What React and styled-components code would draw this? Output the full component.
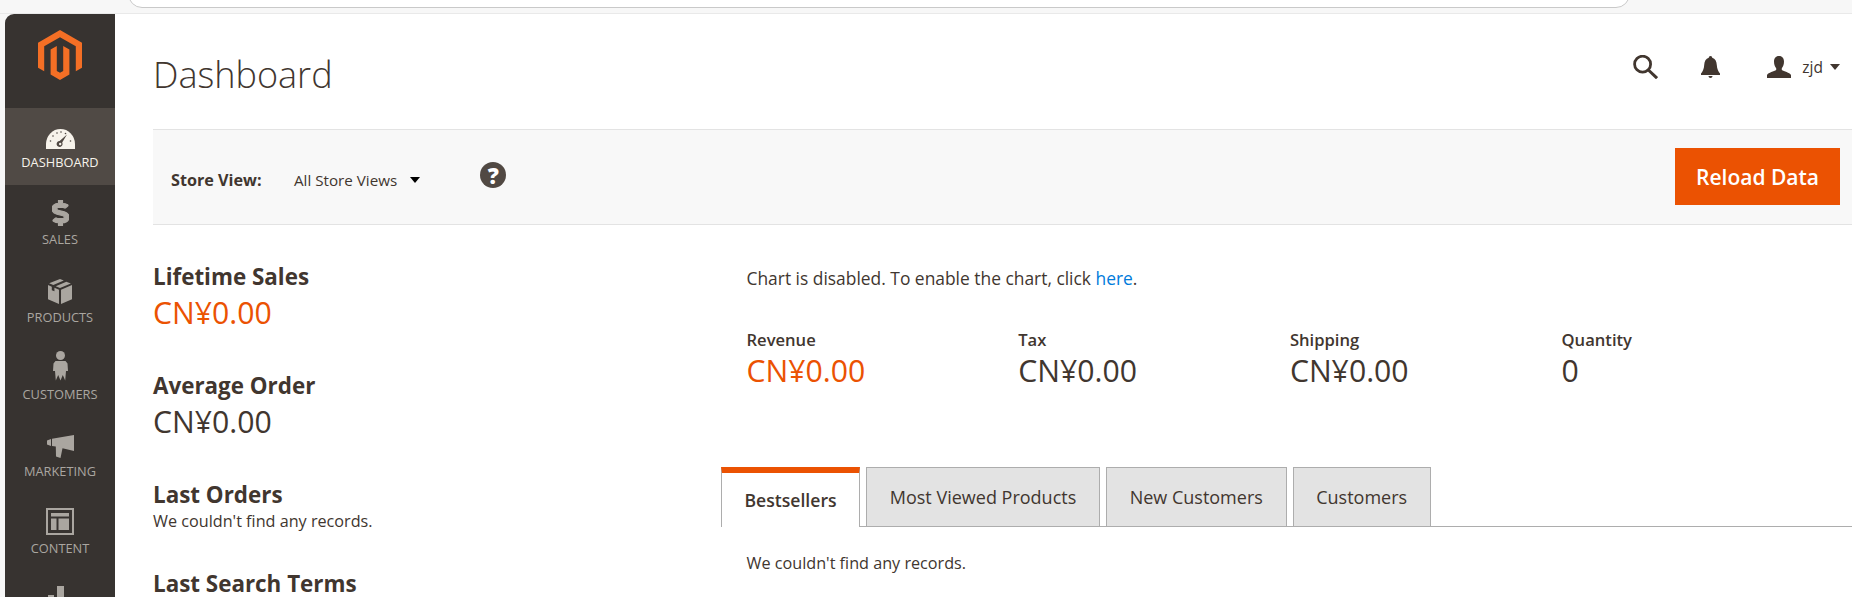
import React from "react";
import styled, { createGlobalStyle } from "styled-components";
import { FaDollarSign } from "react-icons/fa";

const Global = createGlobalStyle`
  html, body { margin: 0; padding: 0; background: #fff; }
  body { font-family: "Open Sans", "Noto Sans", sans-serif; color: #41362f; }
`;

const Page = styled.div`
  width: 1852px; height: 597px; overflow: hidden;
  display: flex; flex-direction: column; background: #f7f7f7;
`;
const BrowserBar = styled.div`
  flex: 0 0 14px; height: 14px; box-sizing: border-box; overflow: hidden;
  padding-left: 128px; background: #f7f7f7; border-bottom: 1px solid #e9e9e9;
`;
const AddressBar = styled.div`
  width: 1502px; height: 28px; margin-top: -20px; box-sizing: border-box;
  background: #fff; border: 1px solid #c9c9c9; border-radius: 14px;
`;
const Body = styled.div`
  flex: 1; display: flex; padding-left: 5px; min-height: 0;
`;
const Sidebar = styled.nav`
  flex: 0 0 110px; background: #373330; border-top-left-radius: 9px; overflow: hidden;
`;
const LogoBox = styled.div`
  height: 94px; display: flex; justify-content: center; padding-top: 16px; box-sizing: border-box;
`;
const NavItem = styled.a`
  display: flex; flex-direction: column; align-items: center;
  height: 77.3px; box-sizing: border-box; padding-top: 10px;
  background: ${p => (p.$active ? "#504a45" : "transparent")};
  color: ${p => (p.$active ? "#f7f3eb" : "#aaa6a0")};
`;
const NavIcon = styled.span`
  height: 31px; display: flex; align-items: flex-end; justify-content: center;
`;
const NavLabel = styled.span`
  font-size: 12.8px; line-height: 16px; margin-top: 5px; text-transform: uppercase;
`;
const Main = styled.main`
  flex: 1; min-width: 0; background: #fff; padding-left: 38px;
`;
const Header = styled.header`
  height: 115px; display: flex; justify-content: space-between; box-sizing: border-box;
`;
const Title = styled.h1`
  margin: 38px 0 0; font-size: 36px; line-height: 46px; font-weight: 300; color: #41362f;
`;
const Actions = styled.div`
  display: flex; align-items: center; height: 26px; margin-top: 40px; padding-right: 12px;
`;
const ActionIcon = styled.span`
  display: flex; margin-left: ${p => p.$gap}px;
`;
const UserName = styled.span`
  font-size: 15.5px; margin-left: 11px; line-height: 20px;
`;
const Caret = styled.span`
  width: 0; height: 0; margin-left: ${p => p.$gap}px;
  border-left: 5px solid transparent; border-right: 5px solid transparent;
  border-top: 6px solid ${p => p.$color || "#41362f"};
`;
const StoreBar = styled.div`
  height: 96px; box-sizing: border-box; display: flex; justify-content: space-between;
  background: #f8f8f8; border-top: 1px solid #e3e3e3; border-bottom: 1px solid #e3e3e3;
  padding: 18px 12px 0 18px;
`;
const Scope = styled.div`
  display: flex; align-items: center; height: 66px; margin-top: -1px;
`;
const ScopeLabel = styled.strong`
  font-size: 16.2px; font-weight: 700; width: 123px;
`;
const ScopeValue = styled.span`
  font-size: 15.2px; color: #41362f;
`;
const Help = styled.span`
  width: 26px; height: 26px; border-radius: 50%; background: #514943; color: #fff;
  display: flex; align-items: center; justify-content: center;
  font-size: 22px; font-weight: 800; margin: -10px 0 0 60px;
`;
const ReloadButton = styled.button`
  width: 165px; height: 57px; border: 0; background: #eb5202; color: #fff;
  font: 600 21px "Open Sans", sans-serif;
`;
const Content = styled.div`
  display: grid; grid-template-columns: 568px 1fr;
`;
const Side = styled.div`
  padding-top: 36px;
`;
const Block = styled.section`
  margin-bottom: 35px;
`;
const BlockTitle = styled.h3`
  margin: 0 0 -2px; font-size: 22.4px; line-height: 32px; font-weight: 700; color: #41362f;
`;
const Amount = styled.div`
  font-size: 30.2px; line-height: 44px; color: ${p => (p.$accent ? "#eb5202" : "#41362f")};
`;
const Note = styled.p`
  margin: 0; font-size: 16.2px; line-height: 24px;
`;
const Charts = styled.div`
  padding-top: 41px;
`;
const ChartNote = styled.p`
  margin: 0 0 0 25.5px; font-size: 17.4px; line-height: 24px;
  a { color: #007bdb; text-decoration: none; }
`;
const Totals = styled.div`
  display: grid; grid-template-columns: repeat(4, 271.7px); margin: 40px 0 0 25.5px;
`;
const TotalLabel = styled.div`
  font-size: 16.6px; line-height: 19px; font-weight: 600;
`;
const TabRow = styled.div`
  display: flex; gap: 6px; margin-top: 74px; height: 60px; box-sizing: border-box;
  border-bottom: 1px solid #adadad;
`;
const Tab = styled.div`
  box-sizing: border-box; height: 60px; padding: 0 ${p => p.$pad}px;
  display: flex; align-items: center;
  font-size: ${p => (p.$active ? 17.6 : 18)}px; font-weight: ${p => (p.$active ? 600 : 400)};
  background: ${p => (p.$active ? "#fff" : "#e3e3e3")};
  border: 1px solid #adadad; border-bottom: ${p => (p.$active ? "0" : "1px solid #adadad")};
  border-top: ${p => (p.$active ? "6px solid #eb5202" : "1px solid #adadad")};
`;
const TabBody = styled.p`
  margin: 25px 0 0 25.5px; font-size: 16.2px; line-height: 22px;
`;

const c = "#aaa6a0";
const Logo = () => (
  <svg width="44" height="50" viewBox="0 0 44 50" fill="#f46f25">
    <path d="M22 0L44 12.7V37.7L37.8 41.3V16.3L22 7.2 6.2 16.3V41.3L0 37.7V12.7Z" />
    <path d="M22 50L12.6 44.6V19.6L18.8 16V41L22 42.8 25.2 41V16L31.4 19.6V44.6Z" />
  </svg>
);
const GaugeIcon = () => (
  <svg width="29" height="20" viewBox="0 0 29 20">
    <path d="M0 20V15A14.5 15 0 0 1 29 15V20Z" fill="#f7f3eb" />
    <g fill="#514943">
      <circle cx="4.5" cy="12" r=".8" /><circle cx="7" cy="7" r=".8" /><circle cx="11" cy="4" r=".8" />
      <circle cx="15" cy="3" r=".8" /><circle cx="19.5" cy="4.5" r=".8" /><circle cx="24.5" cy="12" r=".8" />
    </g>
    <path d="M21 5.5L16.2 13.5A3 3 0 1 1 13.6 12Z" fill="#514943" />
    <circle cx="14.2" cy="15" r="1.2" fill="#f7f3eb" />
  </svg>
);
const BoxIcon = () => (
  <svg width="24" height="25" viewBox="2.5 .5 19 23.5" preserveAspectRatio="none" fill={c}>
    <path d="M12 0.5L15 2 6.7 6.2 3.4 4.6ZM17 3L20.6 4.7 12 9 8.6 7.2Z" />
    <path d="M2.5 6.2L5.5 7.7V11L7.6 12V8.8L11.2 10.5V24L2.5 19.5Z" />
    <path d="M21.5 6.2V19.5L12.8 24V10.5Z" />
  </svg>
);
const CustomerIcon = () => (
  <svg width="15" height="30" viewBox="0 0 15 30" fill={c}>
    <circle cx="7.5" cy="4.5" r="4.5" />
    <path d="M2.5 10H12.5L14.5 12.5 15 20H13L12.2 29.5 9.8 24 7.5 29.5 5.2 24 2.8 29.5 2 20H0L.5 12.5Z" />
  </svg>
);
const MegaphoneIcon = () => (
  <svg width="27" height="23" viewBox="0 0 27 23" fill={c}>
    <path d="M0 5.5L4 4V11L0 9.5Z" />
    <path d="M5 3.8L27 0V16L15.5 13.2 13.5 23 9 21.5 8.8 11.6 5 11Z" />
  </svg>
);
const ContentIcon = () => (
  <svg width="28" height="27" viewBox="0 0 28 27" fill={c}>
    <path fillRule="evenodd" d="M0 0H28V27H0ZM2 2V25H26V2Z" />
    <path d="M5 5H23V8.5H5ZM5 10.5H10.5V22H5ZM12.5 10.5H23V22H12.5Z" />
  </svg>
);
const ReportsIcon = () => (
  <svg width="27" height="27" viewBox="0 0 27 27" fill={c}>
    <path d="M1 9H7V27H1ZM10 0H17V27H10ZM20 14H26V27H20Z" />
  </svg>
);
const SearchIcon = () => (
  <svg width="25" height="24" viewBox="0 0 25 24" fill="none" stroke="#41362f" strokeWidth="2.8">
    <circle cx="9.6" cy="9.2" r="8" />
    <path d="M15.4 15L24 23.2" strokeWidth="3" />
  </svg>
);
const BellIcon = () => (
  <svg width="19" height="22" viewBox="0 0 19 22" fill="#41362f">
    <path d="M9.5 0C10.6 0 11.2.8 11.2 1.8C14.2 2.8 15.6 5.3 15.8 9C16 13 17.4 15.6 19 17.6V19H0V17.6C1.6 15.6 3 13 3.2 9C3.4 5.3 4.8 2.8 7.8 1.8C7.8.8 8.4 0 9.5 0Z" />
    <path d="M7.5 20H11.5C11.5 21 10.6 22 9.5 22S7.5 21 7.5 20Z" />
  </svg>
);
const UserIcon = () => (
  <svg width="24" height="22" viewBox="0 0 24 22" fill="#41362f">
    <path d="M12 0C15.5 0 17 2.6 17 5.6C17 8.6 16 11 14.8 12.2V14C17 15.4 22.5 16.4 24 19V22H0V19C1.5 16.4 7 15.4 9.2 14V12.2C8 11 7 8.6 7 5.6C7 2.6 8.5 0 12 0Z" />
  </svg>
);
const SalesIcon = styled(FaDollarSign)`
  width: 17px; height: 26px; stroke: currentColor; stroke-width: 24px;
`;

const nav = [
  ["Dashboard", <GaugeIcon />, true],
  ["Sales", <SalesIcon preserveAspectRatio="none" />],
  ["Products", <BoxIcon />],
  ["Customers", <CustomerIcon />],
  ["Marketing", <MegaphoneIcon />],
  ["Content", <ContentIcon />],
  [null, <ReportsIcon />],
];
const totals = [["Revenue", "CN¥0.00", true], ["Tax", "CN¥0.00"], ["Shipping", "CN¥0.00"], ["Quantity", "0"]];
const tabs = [["Bestsellers", 22.5, true], ["Most Viewed Products", 22.7], ["New Customers", 22.7], ["Customers", 22.7]];

export default function App() {
  return (
    <Page>
      <Global />
      <BrowserBar><AddressBar /></BrowserBar>
      <Body>
        <Sidebar>
          <LogoBox><Logo /></LogoBox>
          {nav.map(([label, icon, active], i) => (
            <NavItem key={i} $active={active}>
              <NavIcon>{icon}</NavIcon>
              {label && <NavLabel>{label}</NavLabel>}
            </NavItem>
          ))}
        </Sidebar>
        <Main>
          <Header>
            <Title>Dashboard</Title>
            <Actions>
              <ActionIcon $gap={0}><SearchIcon /></ActionIcon>
              <ActionIcon $gap={43}><BellIcon /></ActionIcon>
              <ActionIcon $gap={47}><UserIcon /></ActionIcon>
              <UserName>zjd</UserName>
              <Caret $gap={7} />
            </Actions>
          </Header>
          <StoreBar>
            <Scope>
              <ScopeLabel>Store View:</ScopeLabel>
              <ScopeValue>All Store Views</ScopeValue>
              <Caret $gap={13} $color="#000" />
              <Help>?</Help>
            </Scope>
            <ReloadButton>Reload Data</ReloadButton>
          </StoreBar>
          <Content>
            <Side>
              <Block>
                <BlockTitle>Lifetime Sales</BlockTitle>
                <Amount $accent>CN¥0.00</Amount>
              </Block>
              <Block>
                <BlockTitle>Average Order</BlockTitle>
                <Amount>CN¥0.00</Amount>
              </Block>
              <Block>
                <BlockTitle>Last Orders</BlockTitle>
                <Note>We couldn't find any records.</Note>
              </Block>
              <Block>
                <BlockTitle>Last Search Terms</BlockTitle>
              </Block>
            </Side>
            <Charts>
              <ChartNote>Chart is disabled. To enable the chart, click <a href="#here">here</a>.</ChartNote>
              <Totals>
                {totals.map(([label, value, accent]) => (
                  <div key={label}>
                    <TotalLabel>{label}</TotalLabel>
                    <Amount $accent={accent}>{value}</Amount>
                  </div>
                ))}
              </Totals>
              <TabRow>
                {tabs.map(([label, pad, active]) => (
                  <Tab key={label} $pad={pad} $active={active}>{label}</Tab>
                ))}
              </TabRow>
              <TabBody>We couldn't find any records.</TabBody>
            </Charts>
          </Content>
        </Main>
      </Body>
    </Page>
  );
}
